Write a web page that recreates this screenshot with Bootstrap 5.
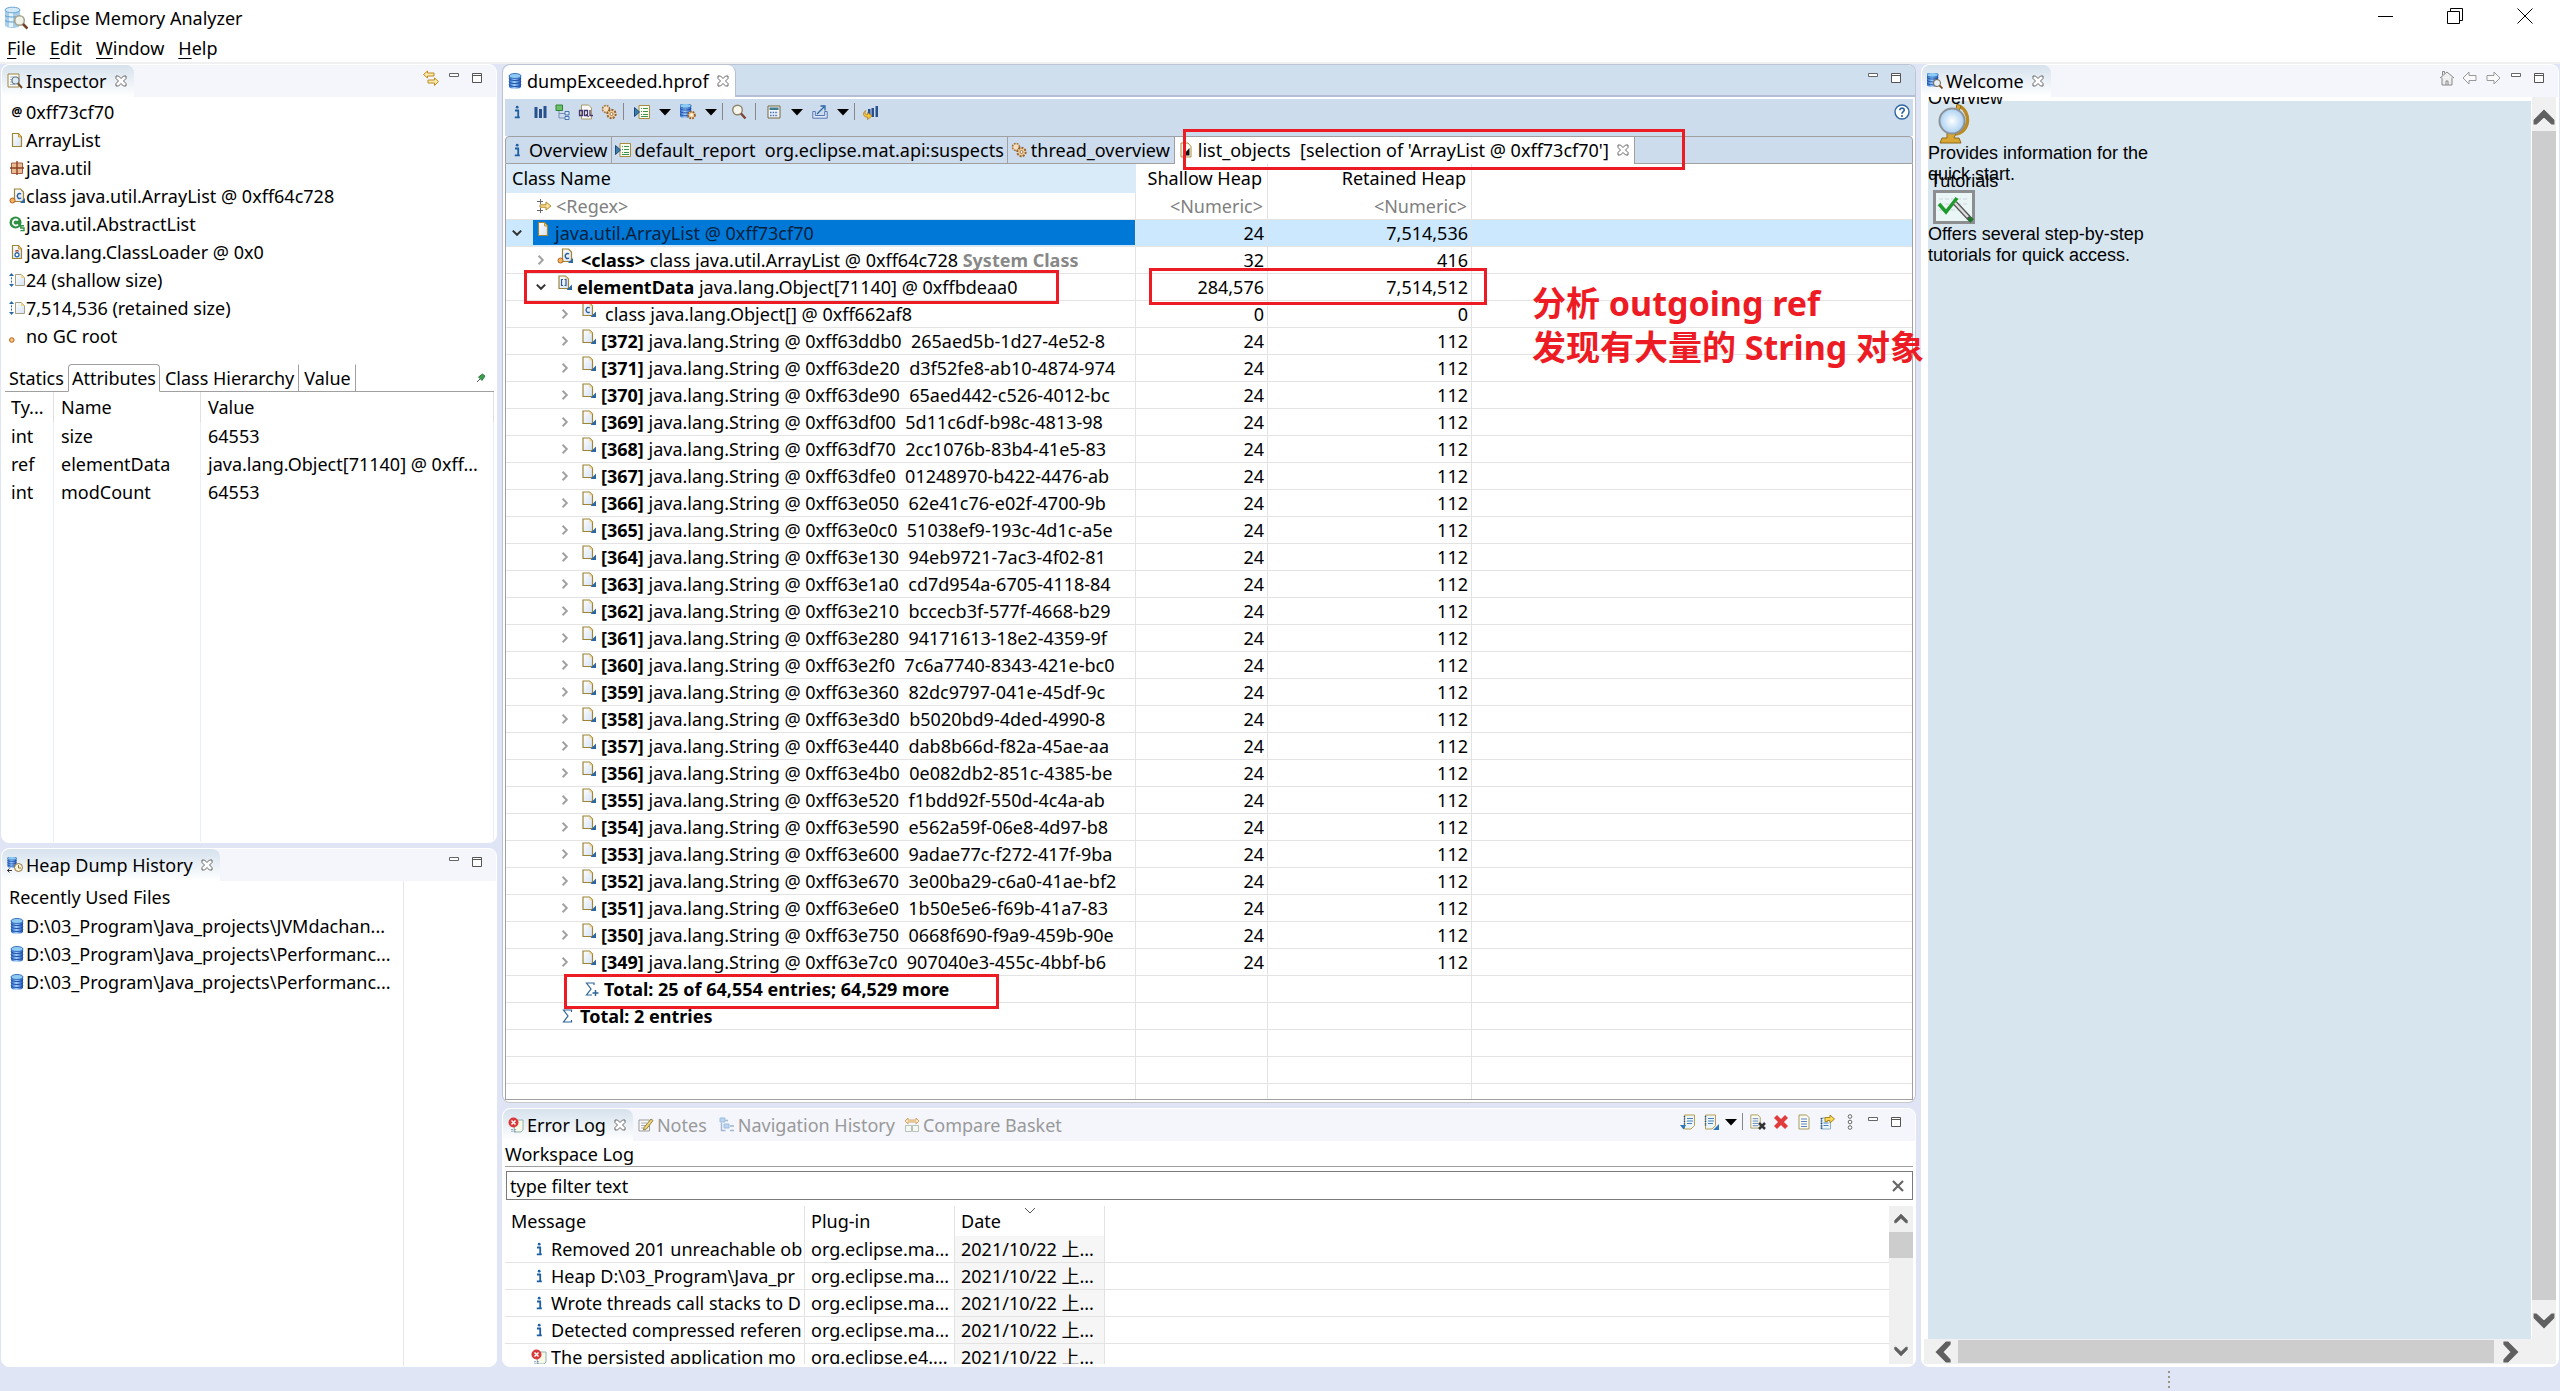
<!DOCTYPE html>
<html lang="en">
<head>
<meta charset="utf-8">
<meta name="viewport" content="width=device-width, initial-scale=1">
<title>Eclipse Memory Analyzer</title>
<link href="https://cdn.jsdelivr.net/npm/bootstrap@5.3.0/dist/css/bootstrap.min.css" rel="stylesheet">
<style>
  body { font-family: "Noto Sans", "Noto Sans CJK SC", sans-serif; font-size: 18px; line-height: 26px; color: #000; background: #dfe5f5; overflow: hidden; white-space: nowrap; }
  svg { display: block; flex: none; }
  button { background: none; border: 0; padding: 0; color: inherit; display: flex; align-items: center; justify-content: center; }
  .i16 { width: 16px; height: 16px; }
  .titlebar { height: 35px; }
  .titlebar .winbtn { width: 70px; height: 32px; }
  .menubar { height: 29px; gap: 14px; padding-left: 7px; border-bottom: 2px solid #f0f0f0; }
  .menubar a { color: #000; text-decoration: none; }
  .menubar a u { text-underline-offset: 3px; }
  .workbench { display: grid; grid-template-columns: minmax(0, 496fr) minmax(0, 1414fr) minmax(0, 638fr); column-gap: 5px; padding: 0 1px; min-height: 0; }
  .stack { min-height: 0; gap: 5px; }
  .pane { background: #fff; border-radius: 8px; border: 1px solid #fff; overflow: hidden; min-height: 0; }
  .pane-inspect { flex: 780 1 0; } .pane-history { flex: 519 1 0; } .pane-log { flex: 0 0 259px; }
  .pane-head { height: 32px; background: #f4f6fc; flex: none; }
  .pane-tab { padding: 0 7px 0 5px; gap: 3px; height: 32px; color: #999; }
  .pane-tab.on { color: #000; background: linear-gradient(#d6e2ed, #fff); border-radius: 8px 8px 0 0; }
  .pane-tab .shut { margin-left: 5px; }
  .pane-tools { padding: 0 8px 0 0; height: 25px; }
  .pane-tools button, .tool { width: 23px; height: 25px; }
  .details { padding: 1px 0 3px; margin: 0; }
  .detail { height: 28px; padding-left: 7px; gap: 1px; }
  .recent { width: 402px; padding-top: 3px; border-right: 1px solid #e3e8f0; }
  .subtabs { height: 28px; margin: 11px 2px 0 3px; border-bottom: 1px solid #a0a0a0; }
  .subtabs button { padding: 0 3px; margin-bottom: -1px; border: 1px solid transparent; height: 28px; }
  .subtabs button.on { border-color: #a0a0a0; border-bottom-color: #fff; border-radius: 4px 4px 0 0; background: #fff; }
  .subtabs button.edge { border-right-color: #a0a0a0; padding: 0 4px; }
  .plain { table-layout: fixed; width: 100%; border-collapse: separate; border-spacing: 0; }
  .plain th { font-weight: 400; }
  .plain th, .plain td { padding: 0; overflow: hidden; }
  .attrs { margin-left: 2px; width: calc(100% - 4px); height: 100%; }
  .attrs th, .attrs td { border-right: 1px solid #e8eefa; height: 28px; padding-left: 7px; text-overflow: ellipsis; vertical-align: middle; }
  .attrs th { height: 30px; border-color: #e0e0e0; }
  .attrs tr.rest td { height: auto; }
  .editor { border: 1px solid #bcc4d4; border-bottom-color: #c8c8c8; }
  .editor-head { height: 32px; background: #d0dfee; border-bottom: 2px solid #b4bfd6; flex: none; }
  .editor-tab { background: #fff; border-radius: 8px 8px 0 0; padding: 0 6px 0 4px; gap: 4px; height: 32px; border-right: 1px solid #b4bfd6; }
  .editor-tab button { margin-left: 4px; }
  .editor-body { margin: 2px; min-height: 0; }
  .bar { background: #cddcec; height: 37px; }
  .tool.mid { width: 26px; } .tool.wide { width: 29px; } .tool.drop { width: 17px; }
  .vsep { width: 7px; height: 25px; display: flex; justify-content: center; align-items: center; }
  .vsep::before { content: ""; width: 1px; height: 17px; background: #888; }
  .viewtabs { background: #cddcec; height: 28px; border: 1px solid #a0a0a0; border-radius: 4px 4px 0 0; }
  .viewtabs button { border-right: 1px solid #a0a0a0; padding: 0 3px; gap: 4px; height: 27px; }
  .viewtabs button.on { background: #fff; padding: 0 5px 0 3px; }
  .gridbox { border: 1px solid #a0a0a0; border-top: 0; overflow: hidden; min-height: 0; }
  .heap th { height: 29px; text-align: right; padding-right: 5px; border-right: 1px solid #e3e3e3; }
  .heap th:first-child { background: #d9ebf9; text-align: left; padding-left: 6px; border-right: 0; }
  .heap th:last-child { border: 0; }
  .heap td { height: 27px; text-align: right; padding-right: 3px; border-right: 1px solid #e3e3e3; border-bottom: 1px solid #e3e3e3; line-height: 26px; }
  .heap td:first-child { text-align: left; padding-right: 0; }
  .heap td:last-child { border-right: 0; }
  .heap .hint td { color: #808080; padding-right: 4px; }
  .node { height: 26px; overflow: hidden; }
  .node svg.obj { align-self: flex-start; margin-top: 1px; }
  .node .twist { width: 22px; height: 26px; flex: none; margin-right: 5px; }
  .lv1 { padding-left: 24px; } .lv2 { padding-left: 48px; }
  .picked td { background: #cce8ff; }
  .picked .label { background: #0078d7; color: #05213d; height: 25px; padding-left: 2px; flex: 1; }
  .sysclass { color: #888; }
  .logs th { height: 30px; padding-left: 6px; border-right: 1px solid #e3e3e3; }
  .logs td { height: 27px; padding-left: 6px; border-right: 1px solid #e3e3e3; border-bottom: 1px solid #e3e3e3; text-overflow: ellipsis; line-height: 26px; }
  .logs th:last-child, .logs td:last-child { border-right: 0; }
  .logs td:nth-child(3) { background: #f6f6f6; }
  .logs td:first-child { text-overflow: clip; }
  .logbox { min-height: 0; margin: 0 2px 2px; }
  .logtitle { height: 26px; margin: 0 2px; border-bottom: 1px solid #a0a0a0; }
  .filter { margin: 4px 2px 6px 3px; border: 1px solid #7a7a7a; height: 30px; }
  .filter input { border: 0; outline: 0; padding: 0 3px; font: inherit; color: #000; min-width: 0; background: none; }
  .vbar { background: #f0f0f0; }
  .vbar.upright { flex: 0 0 24px; }
  .vbar button { flex: none; }
  .thumb { background: #cdcdcd; }
  .welcome { font: 18px/21px "Liberation Sans", sans-serif; min-height: 0; padding: 0 2px 2px; }
  .page { background: #d7e5ef; margin: 4px 1px 0 4px; }
  .page p { margin: 0; }
  .page .over { margin-top: -13px; clip-path: inset(9px 0 0 0); }
  .page .tut { margin-top: -14px; padding-left: 2px; }
  .globe { margin: -6px 0 -2px 9px; }
  .board { margin: -2px 0 0 5px; }
  .statusbar { height: 24px; }
  .statusbar i { margin-left: 84.7%; width: 2px; height: 17px; background: repeating-linear-gradient(#9a9484 0 2px, transparent 2px 5px); }
  .redbox { position: absolute; border: 3px solid #ed1c24; pointer-events: none; }
  .rednote { position: absolute; left: 1030px; top: 217px; font-size: 34px; line-height: 44px; font-weight: 700; color: #ed1c24; pointer-events: none; z-index: 3; }
  .rb1 { left: 681px; top: 65px; width: 502px; height: 41px; }
  .rb2 { left: 22px; top: 206px; width: 535px; height: 34px; }
  .rb3 { left: 647px; top: 204px; width: 338px; height: 37px; }
  .rb4 { left: 62px; top: 910px; width: 435px; height: 35px; }
  .flip { rotate: 180deg; } .turnl { rotate: -90deg; } .turnr { rotate: 90deg; }
</style>
</head>
<body class="vh-100 d-flex flex-column">

<svg width="0" height="0" class="position-absolute">
  <defs>
    <linearGradient id="gp" x1="0" y1="0" x2="1" y2="1"><stop offset="0" stop-color="#fff"/><stop offset="1" stop-color="#d5e2f5"/></linearGradient>
    <linearGradient id="gb" x1="0" x2="1"><stop offset="0" stop-color="#2a66c8"/><stop offset=".45" stop-color="#9fd0fb"/><stop offset="1" stop-color="#1c50b4"/></linearGradient>
    <radialGradient id="gg"><stop offset="0" stop-color="#fff"/><stop offset="1" stop-color="#a9d0f2"/></radialGradient>
  </defs>
  <symbol id="page" viewBox="0 0 16 16"><path d="M3.500 1.500h6l3 3.500v9.500h-9z" fill="url(#gp)" stroke="#9d8436" stroke-width="1.200"/><path d="M9.500 1.500v3.500h3z" fill="#f2d58c" stroke="#b08a2c" stroke-width=".8"/></symbol>
  <symbol id="node" viewBox="0 0 16 16"><path d="M2 1h6.500l3 3v9.500H2z" fill="url(#gp)" stroke="#9d8436" stroke-width="1.200"/><path d="M8.500 1v3.500h3z" fill="#f2d58c"/><path d="M15 9.500V15H9.500z" fill="#2b66a5"/></symbol>
  <symbol id="nodec" viewBox="0 0 16 16"><use href="#node"/><path d="M8.700 6a2.300 2.500 0 1 0 0 4" fill="none" stroke="#2b5c9a" stroke-width="1.300"/></symbol>
  <symbol id="nodea" viewBox="0 0 16 16"><use href="#node"/><path d="M6 4.500H4.500v6H6M7.500 4.500H9v6H7.500" fill="none" stroke="#2b5c9a" stroke-width="1.200"/></symbol>
  <symbol id="nodecg" viewBox="0 0 16 16"><path d="M5.500 1h6l3 3v9.500h-9z" fill="url(#gp)" stroke="#9d8436" stroke-width="1.200"/><path d="M12 6a2.300 2.500 0 1 0 0 4" fill="none" stroke="#2b5c9a" stroke-width="1.400"/><path d="M16 10v5h-5z" fill="#2b66a5"/><circle cx="3.500" cy="12.500" r="2.500" fill="#f8b45c" stroke="#b7601c"/></symbol>
  <symbol id="pkg" viewBox="0 0 16 16"><path d="M2.500 3h11v10.500h-11z" fill="#e9bd94" stroke="#a85b3e"/><path d="M8 1v14M1 8h14" stroke="#8c3f24" stroke-width="1.400"/></symbol>
  <symbol id="cls" viewBox="0 0 16 16"><circle cx="6.500" cy="6.500" r="6" fill="#2e9142"/><path d="M9 4.500a3 3 0 1 0 0 4" fill="none" stroke="#fff" stroke-width="1.800"/><path d="M15 9.800h-3.200v2.200H15v2.600h-3.600" fill="none" stroke="#2e9142" stroke-width="1.400"/></symbol>
  <symbol id="loader" viewBox="0 0 16 16"><use href="#page"/><path d="M6.500 6.500h3M7 7v1.500h2V7" fill="none" stroke="#b0483a"/><circle cx="8" cy="10.800" r="2" fill="#fff" stroke="#2468b0" stroke-width="1.300"/></symbol>
  <symbol id="size" viewBox="0 0 16 16"><path d="M2.500 2v12" stroke="#2b66a5" stroke-dasharray="2 1.300"/><path d="M0 4l2.500-3L5 4zM0 12l2.500 3L5 12z" fill="#2b66a5"/><path d="M6.500 2.500h6l3 3v8h-9z" fill="url(#gp)" stroke="#a7a082"/><path d="M12 2v4h4z" fill="#f2d58c"/></symbol>
  <symbol id="root" viewBox="0 0 16 16"><circle cx="2.800" cy="12" r="2.300" fill="#f9c380" stroke="#b7601c"/></symbol>
  <symbol id="db" viewBox="0 0 16 16"><path d="M2 3v10.500c0 1.300 2.500 2.300 6 2.300s6-1 6-2.300V3z" fill="url(#gb)"/><g fill="none" stroke="#1746a0" stroke-width=".9"><path d="M2 5.500C2.500 7 5 7.500 8 7.500s5.500-.5 6-2M2 8.500C2.500 10 5 10.500 8 10.500s5.500-.5 6-2M2 11.500C2.500 13 5 13.500 8 13.500s5.500-.5 6-2"/></g><ellipse cx="8" cy="3" rx="6" ry="2.500" fill="#8ecbf3" stroke="#2a66b8" stroke-width=".9"/></symbol>
  <symbol id="dbzoom" viewBox="0 0 16 16"><use href="#db" x="-2" y="-1" width="15" height="15"/><circle cx="10" cy="10" r="3.500" fill="#e6f1fb" stroke="#75613c"/><path d="M12.500 12.500L15.500 15.500" stroke="#7a4a20" stroke-width="1.800"/></symbol>
  <symbol id="app" viewBox="0 0 24 24"><path d="M1 4v15c0 2 3.500 3 7.500 3s7.500-1 7.500-3V4z" fill="#a8cdea"/><path d="M5 5h4v16H5z" fill="#e4f2fc"/><path d="M1 9.500c1 2 14 2 15 0M1 14.500c1 2 14 2 15 0" fill="none" stroke="#5c9ccc"/><ellipse cx="8.500" cy="4" rx="7.500" ry="2.800" fill="#d3e9f8" stroke="#68a4d0"/><circle cx="15.500" cy="14.500" r="4.800" fill="#f0f3ea" stroke="#a7a48c" stroke-width="1.600"/><path d="M19 18l4.500 4.500" stroke="#704028" stroke-width="2.600"/></symbol>
  <symbol id="insp" viewBox="0 0 16 16"><path d="M1 1h11v13H1z" fill="#fbfbf2" stroke="#9a8448"/><path d="M3 4h7M3 6.500h3M3 9h3M3 11.500h5" stroke="#9fb6d8"/><circle cx="8.500" cy="7.500" r="3.500" fill="#dcecf8" stroke="#6f7a86" stroke-width="1.200"/><path d="M11 10.500l4 4.500" stroke="#6d4a2a" stroke-width="2"/></symbol>
  <symbol id="hist" viewBox="0 0 16 16"><use href="#db" x="-1" y="-1" width="12" height="12"/><circle cx="11.500" cy="10.500" r="4" fill="#fdf6da" stroke="#8d7440"/><path d="M11.500 8v3H14" fill="none" stroke="#8d7440"/><path d="M0 13.500h5M2.500 11.500l-2 2 2 2" fill="none" stroke="#333"/></symbol>
  <symbol id="x" viewBox="0 0 12 12"><path d="M1 1h2.500L6 3.500 8.500 1H11v2.500L8.500 6 11 8.500V11H8.500L6 8.500 3.500 11H1V8.500L3.500 6 1 3.500z" fill="#fff" stroke="#666" stroke-width="1"/></symbol>
  <symbol id="min" viewBox="0 0 12 12"><path d="M1.500 1.500h9v3h-9z" fill="#fff" stroke="#666"/></symbol>
  <symbol id="max" viewBox="0 0 12 12"><path d="M1.500 1.500h9v9h-9zM1.500 3.500h9" fill="#fff" stroke="#555"/></symbol>
  <symbol id="link" viewBox="0 0 16 16"><path d="M.5 4.500L4.500 1v2H11v3H4.500v2zM15.500 11.500L11.500 8v2H5v3h6.500v2.500z" fill="#fdeab0" stroke="#c08a1e"/></symbol>
  <symbol id="pin" viewBox="0 0 10 10"><path d="M1 9l3-3" stroke="#555"/><path d="M2.500 4l4-3 2.500 2-3 4.500z" fill="#38a04a" stroke="#1c6a34" stroke-width=".8"/></symbol>
  <symbol id="info" viewBox="0 0 16 16"><path d="M6 6.500h3.200V13M5.800 13.300h5" fill="none" stroke="#1d5fa4" stroke-width="1.800"/><circle cx="8.200" cy="3.200" r="1.400" fill="#1d5fa4"/></symbol>
  <symbol id="bars" viewBox="0 0 16 16"><path d="M2.500 3h3v11h-3zM7 5h3v9H7zM11.500 2h3v12h-3z" fill="#27508c"/></symbol>
  <symbol id="tree" viewBox="0 0 16 16"><path d="M1 1h6.500v5.500H1z" fill="#6dc06a" stroke="#2d8436"/><path d="M4 7v7h6M4 9.500h6" fill="none" stroke="#7a8fb4"/><path d="M10 7.500h4v3.500h-4zM10 12.500h4v3h-4z" fill="#dce8fa" stroke="#4a74b4"/></symbol>
  <symbol id="oql" viewBox="0 0 16 16"><path d="M3.500 1h7l3 3v11h-10z" fill="#fafafa" stroke="#a89a6a"/><path d="M1.500 6.500h3v5h-3zM6.500 6.500h3v5h-3zM8.500 10l2 3M12 6v5.500h3" fill="none" stroke="#46366e" stroke-width="1.300"/></symbol>
  <symbol id="gears" viewBox="0 0 16 16"><circle cx="5" cy="5" r="3.500" fill="#f3dfc0" stroke="#a07040" stroke-width="1.600" stroke-dasharray="1.800 1"/><circle cx="10.500" cy="10" r="4.200" fill="#f0cf9c" stroke="#94602c" stroke-width="1.900" stroke-dasharray="2 1.200"/><circle cx="10.500" cy="10" r="1.500" fill="#fff" stroke="#94602c" stroke-width=".8"/></symbol>
  <symbol id="report" viewBox="0 0 16 16"><path d="M5 1.500h10.500v13H5z" fill="#fbfcf0" stroke="#a88c3c"/><path d="M7 4.500h1M9 4.500h5M7 7.500h1M9 7.500h5M7 10.500h1M9 10.500h5M7 12.500h7" stroke="#3c9450"/><path d="M.5 3.500v9l5-4.500z" fill="#3c7cac" stroke="#1c4c7c"/></symbol>
  <symbol id="dbgear" viewBox="0 0 16 16"><use href="#db" x="-2" y="-1" width="15" height="15"/><circle cx="11.500" cy="11" r="3.400" fill="#f0cf9c" stroke="#94602c" stroke-width="1.800" stroke-dasharray="1.800 1"/><circle cx="11.500" cy="11" r="1.200" fill="#fff"/></symbol>
  <symbol id="mag" viewBox="0 0 16 16"><circle cx="6.500" cy="6" r="4.800" fill="#f6f5ee" stroke="#8f8468" stroke-width="1.400"/><path d="M10 9.500l4.500 5" stroke="#7a4430" stroke-width="2.400"/></symbol>
  <symbol id="calc" viewBox="0 0 16 16"><path d="M2 2h12v12H2z" fill="#f0f4fa" stroke="#77683c"/><path d="M3.500 3.500h9V6h-9z" fill="#3f7c8c"/><path d="M4 8.500h8M4 11.500h8" stroke="#4c74b4" stroke-width="1.600" stroke-dasharray="1.600 1"/></symbol>
  <symbol id="export" viewBox="0 0 16 16"><path d="M.8 7.500v6.700h14.400V7.500h-2.500v4H3.300v-4z" fill="#dde8fa" stroke="#5675b0"/><path d="M5 10l7-7M8.500 2H13v4.500" fill="none" stroke="#2b66a5" stroke-width="1.300"/></symbol>
  <symbol id="cmp" viewBox="0 0 16 16"><path d="M5 5h2.500v7H5zM8.500 4H11v9H8.500zM12.500 2H15v11h-2.500z" fill="#27508c"/><path d="M3 6.500c-2 2-1.500 4 1.500 4.300V8.500L9 12l-4.500 3.500v-2.300C0 13-1 9 3 6.500z" fill="#f8c838" stroke="#b07818" stroke-width=".8"/></symbol>
  <symbol id="help" viewBox="0 0 16 16"><circle cx="8" cy="8" r="7" fill="#fff" stroke="#2f64a0" stroke-width="1.400"/><path d="M5.800 6.200c0-3 4.600-2.700 4.400 0C10 7.700 8 7.700 8 9.700" fill="none" stroke="#2f64a0" stroke-width="1.700"/><circle cx="8" cy="12" r="1.100" fill="#2f64a0"/></symbol>
  <symbol id="caret" viewBox="0 0 12 8"><path d="M0 1h12L6 7.500z" fill="#000"/></symbol>
  <symbol id="open" viewBox="0 0 10 10"><path d="M1.500 3L5 6.500 8.500 3" fill="none" stroke="#333" stroke-width="1.700"/></symbol>
  <symbol id="shutc" viewBox="0 0 10 10"><path d="M3 1.500L6.500 5 3 8.500" fill="none" stroke="#a0a0a0" stroke-width="1.600"/></symbol>
  <symbol id="regex" viewBox="0 0 16 16"><path d="M1 3.500h6M4.500 1v5M1 12.500h6M4.500 10v5" fill="none" stroke="#666"/><path d="M4 6.800h6V4l5 4-5 4V9.200H4z" fill="#fbe49a" stroke="#b8862a"/></symbol>
  <symbol id="list" viewBox="0 0 16 16"><path d="M3 1h7l3 3.500V15H3z" fill="#fffdf4" stroke="#a88c3c"/><path d="M11.500 6v7.500H4.500z" fill="#111"/></symbol>
  <symbol id="sum" viewBox="0 0 16 16"><path d="M11.500 4V2h-8l4.500 6-4.500 6h8v-2" fill="none" stroke="#2f6496" stroke-width="1.200"/></symbol>
  <symbol id="sump" viewBox="0 0 16 16"><path d="M10 4V2H2.500L7 8l-4.500 6H8" fill="none" stroke="#2f6496" stroke-width="1.200"/><path d="M11.500 9v6M8.500 12h6" stroke="#2f6496" stroke-width="1.500"/></symbol>
  <symbol id="err" viewBox="0 0 16 16"><path d="M7 3h8v10l-2 2H6z" fill="#f8fae8" stroke="#8fb0b0"/><circle cx="5.500" cy="5.500" r="5" fill="#d83a3a"/><path d="M3.500 3.500l4 4M7.500 3.500l-4 4" stroke="#fff" stroke-width="1.500"/><path d="M4 12v3M7 12v3" stroke="#46a" stroke-dasharray="1.300 1"/></symbol>
  <symbol id="notes" viewBox="0 0 16 16"><path d="M1 3h10.500v11H1z" fill="#fafafa" stroke="#999"/><path d="M3 6h6M3 8.500h5M3 11h4" stroke="#aab"/><path d="M6 10.500L13 2l2 1.500L8.500 12l-3 1z" fill="#f2d468" stroke="#8d8250"/></symbol>
  <symbol id="nav" viewBox="0 0 16 16"><g opacity=".65"><path d="M1 1h5v4H1zM5 7h5v4H5z" fill="#9cc4ec" stroke="#6c9cd0"/><path d="M2.500 6v7.500h4M11 9h4M11 13.500h4M6.500 3.500H9" fill="none" stroke="#7a92b4" stroke-width="1.400"/></g></symbol>
  <symbol id="basket" viewBox="0 0 16 16"><path d="M1 4l3-3v2h8V1l3 3-3 3V5H4v2z" fill="#fbe6c0" stroke="#d0a060" stroke-width=".9"/><path d="M1.500 8.500h6v6h-6zM8.500 8.500h6v6h-6z" fill="#f4f7f2" stroke="#b4c2b8"/></symbol>
  <symbol id="sheet" viewBox="0 0 16 16"><path d="M3 1h7.500L13 3.500V15H3z" fill="#fafcf4" stroke="#a79a5c"/><path d="M5 5h6M5 7.500h6M5 10h6M5 12.500h6" stroke="#5c80c0"/></symbol>
  <symbol id="imp" viewBox="0 0 16 16"><path d="M4.500 1h10v10.500L11 15H4.500z" fill="#eaf6fc" stroke="#b79e50"/><path d="M7 4.500h6M7 7h6M7 9.500h5" stroke="#4c80b8"/><path d="M4.500 2v10" stroke="#234a80" stroke-dasharray="1.200 1.200" stroke-width="1.500"/><path d="M0 11h6l-2.500 4.500z" fill="#2c78b8"/></symbol>
  <symbol id="exp" viewBox="0 0 16 16"><path d="M2.500 1h10v10.500L9 15H2.500z" fill="#eaf6fc" stroke="#b79e50"/><path d="M5 4.500h6M5 7h6M5 9.500h5" stroke="#4c80b8"/><path d="M2.500 2v10" stroke="#234a80" stroke-dasharray="1.200 1.200" stroke-width="1.500"/><path d="M16 10v6h-6z" fill="#2c78b8"/></symbol>
  <symbol id="clr" viewBox="0 0 16 16"><use href="#sheet" x="-2" y="0" width="15" height="15"/><path d="M9 9l6 6M15 9l-6 6" stroke="#333" stroke-width="2.500"/></symbol>
  <symbol id="del" viewBox="0 0 16 16"><path d="M2.500 2.500l11 11M13.500 2.500l-11 11" stroke="#e03c3c" stroke-width="4.200"/></symbol>
  <symbol id="rest" viewBox="0 0 16 16"><path d="M2.500 4h9v11h-9z" fill="#eaf6fc" stroke="#8fb0c0"/><path d="M2.500 4v11" stroke="#234a80" stroke-dasharray="1.200 1.200" stroke-width="1.800"/><path d="M4.500 9h5M4.500 11.500h5" stroke="#4c80b8"/><path d="M6 7.500V3.500h5V1l4.500 4L11 9V6.500H8.500v1z" fill="#fbd858" stroke="#a88420"/></symbol>
  <symbol id="dots" viewBox="0 0 16 16"><g fill="#fff" stroke="#666"><circle cx="8" cy="2.500" r="1.800"/><circle cx="8" cy="8" r="1.800"/><circle cx="8" cy="13.500" r="1.800"/></g></symbol>
  <symbol id="home" viewBox="0 0 16 16"><path d="M1 8l7-6 7 6M3 7.500V15h10V7.500M3.500 5V1.500h2v2M7 15v-4h2v4" fill="#eee" stroke="#888"/></symbol>
  <symbol id="left" viewBox="0 0 16 16"><path d="M1 8l6-6v3.500h7v5H7V14z" fill="#fafafa" stroke="#999"/></symbol>
  <symbol id="right" viewBox="0 0 16 16"><path d="M15 8L9 2v3.500H2v5h7V14z" fill="#fafafa" stroke="#999"/></symbol>
  <symbol id="up" viewBox="0 0 20 20"><path d="M1 15.500V12l9-9 9 9v3.500h-2L10 9l-7 6.500z" fill="#606060" stroke="#606060"/></symbol>
</svg>

<header>
  <div class="titlebar bg-white d-flex align-items-center ps-1">
    <svg width="24" height="24"><use href="#app"/></svg>
    <span class="ms-1">Eclipse Memory Analyzer</span>
    <div class="ms-auto d-flex align-self-start">
      <button class="winbtn" aria-label="Minimize"><svg width="16" height="16"><path d="M1 8.500h15" stroke="#000"/></svg></button>
      <button class="winbtn" aria-label="Restore"><svg width="16" height="16" fill="none" stroke="#000"><path d="M.5 3.500h12v12H.5zM3.500 3.500v-3h12v12h-3"/></svg></button>
      <button class="winbtn" aria-label="Close"><svg width="16" height="16"><path d="M.5.500l15 15M15.500.500l-15 15" stroke="#000"/></svg></button>
    </div>
  </div>
  <nav class="menubar bg-white d-flex"><a href="#"><u>F</u>ile</a><a href="#"><u>E</u>dit</a><a href="#"><u>W</u>indow</a><a href="#"><u>H</u>elp</a></nav>
</header>

<main class="workbench flex-fill">
  <div class="stack d-flex flex-column">
    <section class="pane pane-inspect d-flex flex-column">
      <div class="pane-head d-flex">
        <div class="pane-tab on d-flex align-items-center"><svg class="i16"><use href="#insp"/></svg>Inspector<button class="shut" aria-label="Close"><svg width="12" height="12"><use href="#x"/></svg></button></div>
        <div class="pane-tools d-flex ms-auto"><button aria-label="Link"><svg class="i16"><use href="#link"/></svg></button><button aria-label="Minimize"><svg width="12" height="12"><use href="#min"/></svg></button><button aria-label="Maximize"><svg width="12" height="12"><use href="#max"/></svg></button></div>
      </div>
      <ul class="list-unstyled details" id="details"></ul>
      <div class="subtabs d-flex"><button>Statics</button><button class="on">Attributes</button><button class="edge">Class Hierarchy</button><button class="edge">Value</button><button class="ms-auto me-1" aria-label="Pin"><svg width="10" height="10"><use href="#pin"/></svg></button></div>
      <div class="flex-fill overflow-hidden">
        <table class="plain attrs">
          <colgroup><col style="width:50px"><col style="width:147px"><col></colgroup>
          <thead><tr><th>Ty...</th><th>Name</th><th>Value</th></tr></thead>
          <tbody><tr><td>int</td><td>size</td><td>64553</td></tr><tr><td>ref</td><td>elementData</td><td>java.lang.Object[71140] @ 0xff...</td></tr><tr><td>int</td><td>modCount</td><td>64553</td></tr><tr class="rest"><td></td><td></td><td></td></tr></tbody>
        </table>
      </div>
    </section>
    <section class="pane pane-history d-flex flex-column">
      <div class="pane-head d-flex">
        <div class="pane-tab on d-flex align-items-center"><svg class="i16"><use href="#hist"/></svg>Heap Dump History<button class="shut" aria-label="Close"><svg width="12" height="12"><use href="#x"/></svg></button></div>
        <div class="pane-tools d-flex ms-auto"><button aria-label="Minimize"><svg width="12" height="12"><use href="#min"/></svg></button><button aria-label="Maximize"><svg width="12" height="12"><use href="#max"/></svg></button></div>
      </div>
      <div class="recent flex-fill">
        <div class="detail">Recently Used Files</div>
        <div class="detail d-flex align-items-center"><svg class="i16"><use href="#db"/></svg>D:\03_Program\Java_projects\JVMdachan...</div>
        <div class="detail d-flex align-items-center"><svg class="i16"><use href="#db"/></svg>D:\03_Program\Java_projects\Performanc...</div>
        <div class="detail d-flex align-items-center"><svg class="i16"><use href="#db"/></svg>D:\03_Program\Java_projects\Performanc...</div>
      </div>
    </section>
  </div>

  <div class="stack d-flex flex-column position-relative">
    <section class="pane editor d-flex flex-column flex-fill">
      <div class="editor-head d-flex">
        <div class="editor-tab d-flex align-items-center"><svg class="i16"><use href="#db"/></svg>dumpExceeded.hprof<button aria-label="Close"><svg width="12" height="12"><use href="#x"/></svg></button></div>
        <div class="pane-tools d-flex ms-auto"><button aria-label="Minimize"><svg width="12" height="12"><use href="#min"/></svg></button><button aria-label="Maximize"><svg width="12" height="12"><use href="#max"/></svg></button></div>
      </div>
      <div class="editor-body d-flex flex-column flex-fill">
        <div class="bar d-flex" id="toolbar"></div>
        <div class="viewtabs d-flex">
          <button><svg class="i16"><use href="#info"/></svg>Overview</button>
          <button><svg class="i16"><use href="#report"/></svg>default_report&nbsp; org.eclipse.mat.api:suspects</button>
          <button class="pe-1"><svg class="i16"><use href="#gears"/></svg>thread_overview</button>
          <button class="on"><svg class="i16"><use href="#list"/></svg>list_objects&nbsp; [selection of 'ArrayList @ 0xff73cf70']<svg class="ms-1" width="12" height="12"><use href="#x"/></svg></button>
        </div>
        <div class="gridbox flex-fill">
          <table class="plain heap">
            <colgroup><col style="width:630px"><col style="width:132px"><col style="width:204px"><col></colgroup>
            <thead><tr><th>Class Name</th><th>Shallow Heap</th><th>Retained Heap</th><th></th></tr></thead>
            <tbody id="heap"></tbody>
          </table>
        </div>
      </div>
    </section>
    <section class="pane pane-log d-flex flex-column">
      <div class="pane-head d-flex">
        <div class="pane-tab on d-flex align-items-center"><svg class="i16"><use href="#err"/></svg>Error Log<button class="shut" aria-label="Close"><svg width="12" height="12"><use href="#x"/></svg></button></div>
        <div class="pane-tab d-flex align-items-center"><svg class="i16"><use href="#notes"/></svg>Notes</div>
        <div class="pane-tab d-flex align-items-center pe-1"><svg class="i16"><use href="#nav"/></svg>Navigation History</div>
        <div class="pane-tab d-flex align-items-center pe-1"><svg class="i16"><use href="#basket"/></svg>Compare Basket</div>
        <div class="pane-tools d-flex ms-auto" id="logtools"></div>
      </div>
      <div class="logtitle">Workspace Log</div>
      <div class="filter d-flex"><input class="flex-fill" type="text" value="type filter text" aria-label="Filter log"><button class="px-2" aria-label="Clear"><svg width="12" height="12"><path d="M1 1l10 10M11 1L1 11" stroke="#666" stroke-width="2.200"/></svg></button></div>
      <div class="logbox flex-fill d-flex overflow-hidden">
        <div class="flex-fill overflow-hidden">
          <table class="plain logs">
            <colgroup><col style="width:300px"><col style="width:150px"><col style="width:150px"><col></colgroup>
            <thead><tr><th>Message</th><th>Plug-in</th><th class="position-relative">Date<svg class="position-absolute top-0 start-50 translate-middle-x" width="12" height="10"><path d="M1 2l5 5 5-5" fill="none" stroke="#555"/></svg></th><th></th></tr></thead>
            <tbody id="logs"></tbody>
          </table>
        </div>
        <div class="vbar upright d-flex flex-column align-items-center">
          <button style="height:26px" aria-label="Up"><svg width="14" height="14"><use href="#up"/></svg></button>
          <div class="thumb w-100" style="height:26px"></div>
          <button class="mt-auto" style="height:26px" aria-label="Down"><svg class="flip" width="14" height="14"><use href="#up"/></svg></button>
        </div>
      </div>
    </section>
    <div class="redbox rb1"></div><div class="redbox rb2"></div><div class="redbox rb3"></div><div class="redbox rb4"></div>
    <div class="rednote">分析 outgoing ref<br>发现有大量的 String 对象</div>
  </div>

  <section class="pane d-flex flex-column">
    <div class="pane-head d-flex">
      <div class="pane-tab on d-flex align-items-center"><svg class="i16"><use href="#dbzoom"/></svg>Welcome<button class="shut" aria-label="Close"><svg width="12" height="12"><use href="#x"/></svg></button></div>
      <div class="pane-tools d-flex ms-auto"><button aria-label="Home"><svg class="i16"><use href="#home"/></svg></button><button aria-label="Back"><svg class="i16"><use href="#left"/></svg></button><button aria-label="Forward"><svg class="i16"><use href="#right"/></svg></button><button aria-label="Minimize"><svg width="12" height="12"><use href="#min"/></svg></button><button aria-label="Maximize"><svg width="12" height="12"><use href="#max"/></svg></button></div>
    </div>
    <div class="welcome flex-fill d-flex flex-column">
      <div class="flex-fill d-flex">
        <div class="page flex-fill">
          <p class="over">Overview</p>
          <svg class="globe" width="34" height="42" viewBox="0 0 34 42"><path d="M22 3c12 5 12 26-4 28" fill="none" stroke="#b98a24" stroke-width="3.500"/><path d="M20 1l4 2-2 5-3-2zM10 30h9l-2 5h5l2 5H3l2-5h5z" fill="#d8a632" stroke="#8d6a1c"/><circle cx="15" cy="18" r="12.500" fill="url(#gg)" stroke="#8c9298" stroke-width="2"/></svg>
          <p>Provides information for the</p><p>quick start.</p>
          <p class="tut">Tutorials</p>
          <svg class="board" width="42" height="34" viewBox="0 0 42 34"><path d="M1.500 1.500h39v31h-39z" fill="#eaf5f6" stroke="#8c8e90" stroke-width="3"/><path d="M6 9h28M6 14h30M6 20h20" stroke="#cdd6dc" stroke-dasharray="4 2"/><path d="M6 14l7 8L24 8" fill="none" stroke="#1f9a2c" stroke-width="3.500"/><path d="M22 13l14 15 3 3" stroke="#555" stroke-width="5"/><path d="M22 13l13 14" stroke="#ddd" stroke-width="2.500"/><path d="M36 28l3 3" stroke="#1a7a2a" stroke-width="4"/></svg>
          <p>Offers several step-by-step</p><p>tutorials for quick access.</p>
        </div>
        <div class="vbar upright d-flex flex-column align-items-center">
          <button style="height:34px;padding-top:8px" aria-label="Up"><svg width="22" height="22"><use href="#up"/></svg></button>
          <div class="thumb w-100 flex-fill"></div>
          <button style="height:39px" aria-label="Down"><svg class="flip" width="22" height="22"><use href="#up"/></svg></button>
        </div>
      </div>
      <div class="vbar d-flex align-items-center" style="height:25px;padding-right:24px">
        <button style="width:34px;padding-left:6px" aria-label="Left"><svg class="turnl" width="22" height="22"><use href="#up"/></svg></button>
        <div class="thumb flex-fill" style="height:23px"></div>
        <button style="width:38px;padding-right:6px" aria-label="Right"><svg class="turnr" width="22" height="22"><use href="#up"/></svg></button>
      </div>
    </div>
  </section>
</main>
<footer class="statusbar d-flex align-items-center"><i></i></footer>

<script src="https://cdn.jsdelivr.net/npm/bootstrap@5.3.0/dist/js/bootstrap.bundle.min.js"></script>
<script>
  const icon = (id, cls = '') => `<svg class="i16 ${cls}"><use href="#${id}"/></svg>`;
  const el = id => document.getElementById(id);

  el('details').innerHTML = [
    ['at', '0xff73cf70'], ['page', 'ArrayList'], ['pkg', 'java.util'], ['nodecg', 'class java.util.ArrayList @ 0xff64c728'],
    ['cls', 'java.util.AbstractList'], ['loader', 'java.lang.ClassLoader @ 0x0'], ['size', '24 (shallow size)'],
    ['size', '7,514,536 (retained size)'], ['root', 'no GC root']
  ].map(([i, t]) => `<li class="detail d-flex align-items-center">${i === 'at' ? '<b class="text-center" style="width:16px;font-size:12px">@</b>' : icon(i)}${t}</li>`).join('');

  const tools = [['info'], ['bars'], ['tree'], ['oql'], ['gears'], '|', ['report', 'wide'], 'v', ['dbgear', 'wide'], 'v', '|', ['mag', 'mid'], '|', ['calc', 'wide'], 'v', ['export', 'wide'], 'v', '|', ['cmp', 'mid']];
  const bar = list => list.map(t => t === '|' ? '<span class="vsep"></span>'
    : t === 'v' ? '<button class="tool drop" aria-label="Menu"><svg width="12" height="8"><use href="#caret"/></svg></button>'
    : `<button class="tool ${t[1] || ''}" aria-label="${t[0]}">${icon(t[0])}</button>`).join('');
  el('toolbar').innerHTML = bar(tools) + '<button class="tool ms-auto" aria-label="Help">' + icon('help') + '</button>';
  el('logtools').innerHTML = bar([['imp'], ['exp'], 'v', '|', ['clr'], ['del'], ['sheet'], ['rest'], ['dots']])
    + '<button aria-label="Minimize"><svg width="12" height="12"><use href="#min"/></svg></button><button aria-label="Maximize"><svg width="12" height="12"><use href="#max"/></svg></button>';

  const strings = `372 ddb0 265aed5b-1d27-4e52-8
371 de20 d3f52fe8-ab10-4874-974
370 de90 65aed442-c526-4012-bc
369 df00 5d11c6df-b98c-4813-98
368 df70 2cc1076b-83b4-41e5-83
367 dfe0 01248970-b422-4476-ab
366 e050 62e41c76-e02f-4700-9b
365 e0c0 51038ef9-193c-4d1c-a5e
364 e130 94eb9721-7ac3-4f02-81
363 e1a0 cd7d954a-6705-4118-84
362 e210 bccecb3f-577f-4668-b29
361 e280 94171613-18e2-4359-9f
360 e2f0 7c6a7740-8343-421e-bc0
359 e360 82dc9797-041e-45df-9c
358 e3d0 b5020bd9-4ded-4990-8
357 e440 dab8b66d-f82a-45ae-aa
356 e4b0 0e082db2-851c-4385-be
355 e520 f1bdd92f-550d-4c4a-ab
354 e590 e562a59f-06e8-4d97-b8
353 e600 9adae77c-f272-417f-9ba
352 e670 3e00ba29-c6a0-41ae-bf2
351 e6e0 1b50e5e6-f69b-41a7-83
350 e750 0668f690-f9a9-459b-90e
349 e7c0 907040e3-455c-4bbf-b6`.split('\n').map(s => s.split(' '));
  const twist = o => `<button class="twist" aria-label="${o ? 'Collapse' : 'Expand'}"><svg width="12" height="12"><use href="#${o ? 'open' : 'shutc'}"/></svg></button>`;
  const row = (cell, a = '', b = '', cls = '') => `<tr class="${cls}"><td>${cell}</td><td>${a}</td><td>${b}</td><td></td></tr>`;
  let html = row(`<div class="node d-flex align-items-center" style="padding-left:30px">${icon('regex')}<span class="ms-1">&lt;Regex&gt;</span></div>`, '&lt;Numeric&gt;', '&lt;Numeric&gt;', 'hint');
  html += row(`<div class="node d-flex align-items-center">${twist(1)}<div class="label d-flex align-items-center">${icon('page', 'obj')}<span class="ms-1">java.util.ArrayList @ 0xff73cf70</span></div></div>`, '24', '7,514,536', 'picked');
  html += row(`<div class="node lv1 d-flex align-items-center">${twist(0)}${icon('nodecg', 'obj')}<span class="ms-2"><b>&lt;class&gt;</b> class java.util.ArrayList @ 0xff64c728 <b class="sysclass">System Class</b></span></div>`, '32', '416');
  html += row(`<div class="node lv1 d-flex align-items-center">${twist(1)}${icon('nodea', 'obj')}<span class="ms-1"><b>elementData</b> java.lang.Object[71140] @ 0xffbdeaa0</span></div>`, '284,576', '7,514,512');
  html += row(`<div class="node lv2 d-flex align-items-center">${twist(0)}${icon('nodec', 'obj')}<span class="ms-2">class java.lang.Object[] @ 0xff662af8</span></div>`, '0', '0');
  html += strings.map(([n, a, s]) => row(`<div class="node lv2 d-flex align-items-center">${twist(0)}${icon('node', 'obj')}<span class="ms-1"><b>[${n}]</b> java.lang.String @ 0xff63${a}&nbsp; ${s}</span></div>`, '24', '112')).join('');
  html += row(`<div class="node d-flex align-items-center" style="padding-left:78px">${icon('sump')}<b class="ms-1">Total: 25 of 64,554 entries; 64,529 more</b></div>`);
  html += row(`<div class="node d-flex align-items-center" style="padding-left:54px">${icon('sum')}<b class="ms-1">Total: 2 entries</b></div>`);
  html += row('') + row('') + row('');
  el('heap').innerHTML = html;

  el('logs').innerHTML = [
    ['info', 'Removed 201 unreachable ob', 'org.eclipse.ma...'], ['info', 'Heap D:\\03_Program\\Java_pr', 'org.eclipse.ma...'],
    ['info', 'Wrote threads call stacks to D', 'org.eclipse.ma...'], ['info', 'Detected compressed referen', 'org.eclipse.ma...'],
    ['err', 'The persisted application mo', 'org.eclipse.e4....']
  ].map(([i, m, p]) => `<tr><td><div class="d-flex align-items-center" style="padding-left:20px">${icon(i)}<span class="ms-1">${m}</span></div></td><td>${p}</td><td>2021/10/22 上...</td><td></td></tr>`).join('');
</script>
</body>
</html>
